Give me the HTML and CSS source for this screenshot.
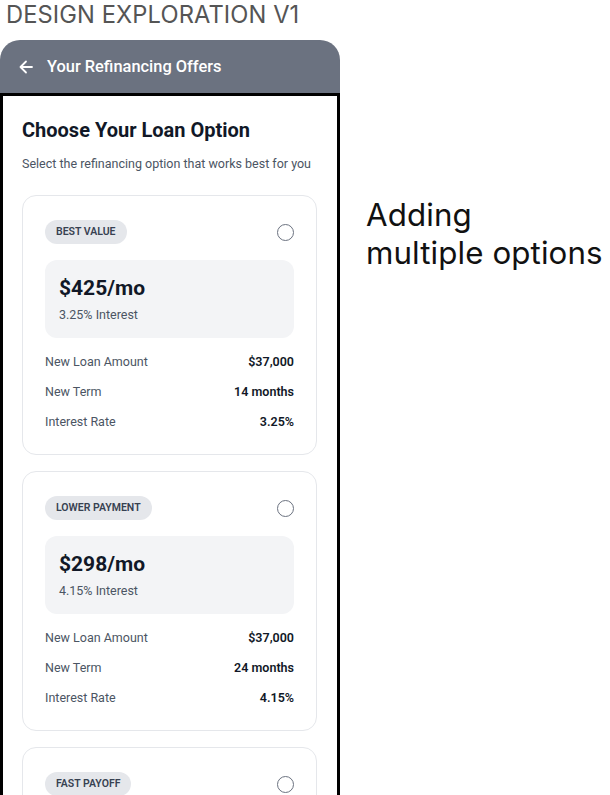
FILE: index.html
```html
<!DOCTYPE html>
<html lang="en">
<head>
  <meta charset="UTF-8">
  <meta name="viewport" content="width=device-width, initial-scale=1.0">
  <title>Design Exploration V1</title>
  <link rel="stylesheet" href="styles.css">
</head>
<body>
  <h1 class="page-title">DESIGN EXPLORATION V1</h1>
  <div class="board">
    <div class="phone">
      <div class="app-bar">
        <svg class="back" width="14" height="14" viewBox="0 0 14 14">
          <path d="M13 7H1.5M7 1.5L1.5 7L7 12.5" fill="none" stroke="#fff" stroke-width="1.8" stroke-linecap="round" stroke-linejoin="round"/>
        </svg>
        <span>Your Refinancing Offers</span>
      </div>
      <div class="screen">
        <h2 class="heading">Choose Your Loan Option</h2>
        <p class="sub">Select the refinancing option that works best for you</p>

        <div class="offer">
          <div class="offer-top">
            <span class="badge">BEST VALUE</span>
            <span class="radio"></span>
          </div>
          <div class="price-box">
            <div class="price">$425/mo</div>
            <div class="rate">3.25% Interest</div>
          </div>
          <div class="rows">
            <div class="row"><span>New Loan Amount</span><b>$37,000</b></div>
            <div class="row"><span>New Term</span><b>14 months</b></div>
            <div class="row"><span>Interest Rate</span><b>3.25%</b></div>
          </div>
        </div>

        <div class="offer">
          <div class="offer-top">
            <span class="badge">LOWER PAYMENT</span>
            <span class="radio"></span>
          </div>
          <div class="price-box">
            <div class="price">$298/mo</div>
            <div class="rate">4.15% Interest</div>
          </div>
          <div class="rows">
            <div class="row"><span>New Loan Amount</span><b>$37,000</b></div>
            <div class="row"><span>New Term</span><b>24 months</b></div>
            <div class="row"><span>Interest Rate</span><b>4.15%</b></div>
          </div>
        </div>

        <div class="offer">
          <div class="offer-top">
            <span class="badge">FAST PAYOFF</span>
            <span class="radio"></span>
          </div>
        </div>
      </div>
    </div>
    <p class="note">Adding<br>multiple options</p>
  </div>
</body>
</html>
```

FILE: styles.css
```css
html, body { margin: 0; padding: 0; background: #fff; overflow: hidden; height: 795px; }
body { font-family: Inter, "Liberation Sans", sans-serif; }

.page-title { margin: 0; height: 40px; padding-left: 6px; font-size: 23.7px; font-weight: 400; line-height: 30px; color: #555; letter-spacing: 0.1px; }

.board { display: flex; align-items: flex-start; }

.phone { width: 340px; flex: none; }
.app-bar { height: 53px; background: #6b7280; border-radius: 20px 20px 0 0; display: flex; align-items: center; padding-left: 19px; gap: 14px; color: #fff; font-family: Roboto, "Liberation Sans", sans-serif; font-size: 16.4px; font-weight: 500; box-sizing: border-box; }
.back { flex: none; margin-top: 1px; }

.screen { border: 3px solid #000; border-bottom: none; background: #fff; padding: 19px 20px 0 19px; height: 702px; overflow: hidden; box-sizing: border-box; font-family: Roboto, "Liberation Sans", sans-serif; }
.heading { margin: 0; font-size: 20px; font-weight: 700; color: #111827; line-height: 30px; }
.sub { margin: 10px 0 0; font-size: 12.5px; color: #4b5563; line-height: 18px; }

.offer { border: 1.5px solid #e5e7eb; border-radius: 14px; padding: 24px 22px 23px; margin-top: 16px; }
.sub + .offer { margin-top: 22px; }
.offer-top { display: flex; justify-content: space-between; align-items: center; }
.badge { background: #e5e7eb; color: #374151; font-size: 10.5px; font-weight: 600; height: 24px; line-height: 24px; padding: 0 11px; border-radius: 12px; }
.radio { width: 15px; height: 15px; border: 1.6px solid #6b7280; border-radius: 50%; }

.price-box { background: #f3f4f6; border-radius: 12px; margin-top: 16px; height: 78px; box-sizing: border-box; padding: 14px 14px 0; }
.price { font-size: 21px; font-weight: 700; color: #111827; line-height: 28px; }
.rate { font-size: 12.5px; color: #4b5563; line-height: 16px; margin-top: 5px; }

.rows { margin-top: 15px; display: flex; flex-direction: column; gap: 12px; }
.row { display: flex; justify-content: space-between; font-size: 12.5px; line-height: 18px; color: #4b5563; }
.row b { color: #111827; font-weight: 600; }

.note { margin: 156px 0 0 26px; font-size: 31.3px; line-height: 38px; color: #111; font-weight: 400; white-space: nowrap; letter-spacing: 0.1px; }
```
